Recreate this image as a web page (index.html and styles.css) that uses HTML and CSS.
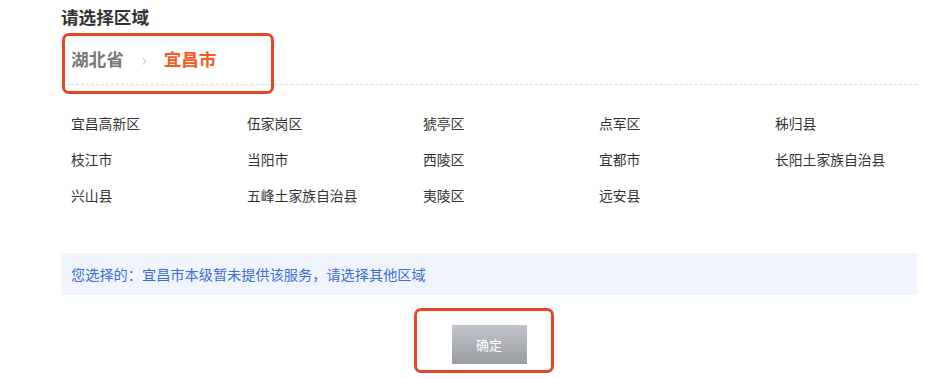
FILE: index.html
```html
<!DOCTYPE html>
<html lang="zh">
<head>
<meta charset="utf-8">
<link rel="stylesheet" href="styles.css">
</head>
<body>
<div class="panel">
  <h2 class="title">请选择区域</h2>
  <div class="crumbs">
    <span class="crumb">湖北省</span>
    <span class="sep">›</span>
    <span class="crumb current">宜昌市</span>
    <div class="mark mark-crumbs"></div>
  </div>
  <ul class="areas">
    <li>宜昌高新区</li><li>伍家岗区</li><li>猇亭区</li><li>点军区</li><li>秭归县</li>
    <li>枝江市</li><li>当阳市</li><li>西陵区</li><li>宜都市</li><li>长阳土家族自治县</li>
    <li>兴山县</li><li>五峰土家族自治县</li><li>夷陵区</li><li>远安县</li>
  </ul>
  <div class="notice">您选择的：宜昌市本级暂未提供该服务，请选择其他区域</div>
  <div class="actions">
    <button class="confirm">确定</button>
    <div class="mark mark-btn"></div>
  </div>
</div>
</body>
</html>
```
FILE: styles.css
```css
* { box-sizing: border-box; }
html, body { margin: 0; padding: 0; background: #fff; }
body { font-family: "Noto Sans CJK SC", "Noto Sans", sans-serif; color: #333; }
.panel { margin-left: 61px; width: 856px; position: relative; }
.title { margin: 0; padding-top: 5px; font-size: 17.6px; line-height: 24px; font-weight: 700; color: #333; }
.crumbs { position: relative; display: flex; align-items: center; height: 56px; padding: 4px 0 0 10px; border-bottom: 1px dashed #ddd; }
.crumb { font-size: 17.6px; font-weight: 700; color: #777; }
.crumb.current { color: #f95a25; }
.sep { color: #c4c4c4; font-size: 16px; margin: 0 17px 0 18px; }
.mark { position: absolute; border: 3px solid #e84428; border-radius: 7px; }
.mark-crumbs { left: 1px; top: 4px; width: 212px; height: 61px; }
.areas { list-style: none; margin: 0; padding: 20px 0 0 10px; display: grid; grid-template-columns: repeat(5, 176px); grid-auto-rows: 36px; font-size: 13.8px; color: #333; }
.areas li { line-height: 36px; }
.notice { margin-top: 40px; height: 42px; background: #f0f4fc; color: #3a6ed8; font-size: 14.2px; line-height: 42px; padding-left: 10px; }
.actions { position: relative; display: flex; justify-content: center; padding-top: 30px; height: 84px; }
.confirm { width: 75px; height: 39px; border: 0; color: #fff; font-family: inherit; font-size: 13px; background: linear-gradient(#c1c4cb, #9a9ca3); }
.mark-btn { left: 353px; top: 13px; width: 140px; height: 65px; }
```
